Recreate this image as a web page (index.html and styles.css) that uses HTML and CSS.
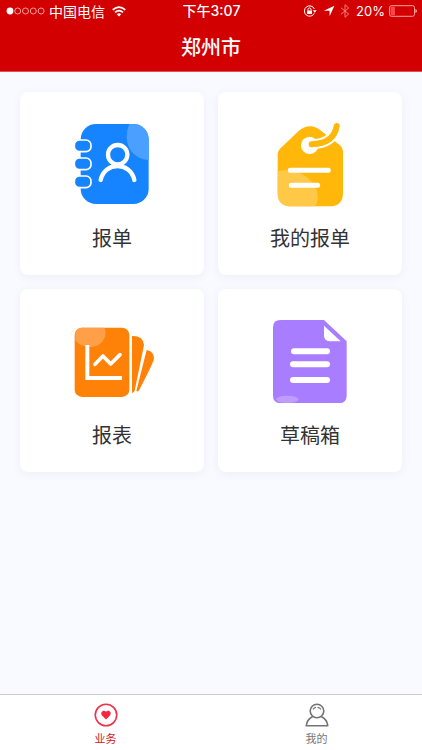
FILE: index.html
```html
<!DOCTYPE html>
<html lang="zh-CN">
<head>
<meta charset="utf-8">
<meta name="viewport" content="width=device-width, initial-scale=1">
<title>郑州市</title>
<link rel="stylesheet" href="styles.css">
</head>
<body>
<header class="header">
  <div class="status">
    <div class="status-side">
      <svg class="signal" viewBox="0 0 39 8" aria-hidden="true">
        <circle cx="4" cy="4" r="3.4" fill="#fff"/>
        <g fill="none" stroke="#ffc4c4" stroke-width=".8"><circle cx="11.7" cy="4" r="3"/><circle cx="19.5" cy="4" r="3"/><circle cx="27.3" cy="4" r="3"/><circle cx="35.1" cy="4" r="3"/></g>
      </svg>
      <span>中国电信</span>
      <svg class="wifi" viewBox="0 0 14 11" aria-hidden="true">
        <g fill="none" stroke="#fff" stroke-width="1.7"><path d="M.7 3.9Q7-1.8 13.3 3.9"/><path d="M3 6.4Q7 2.9 11 6.4"/></g>
        <path d="M4.8 8.3Q7 6.3 9.2 8.3L7 10.6Z" fill="#fff"/>
      </svg>
    </div>
    <time class="clock">下午3:07</time>
    <div class="status-side status-right">
      <svg class="lock" viewBox="0 0 14 12" aria-hidden="true">
        <path d="M11.3 8.3A5.2 5.2 0 1 1 11.4 4" fill="none" stroke="#fff" stroke-width="1"/>
        <path d="M9.7 5.2h4l-2 2.6z" fill="#fff"/>
        <rect x="4" y="5.4" width="5" height="3.6" rx=".4" fill="#fff"/>
        <path d="M5 5.6V4.4a1.5 1.5 0 0 1 3 0v1.2" fill="none" stroke="#fff"/>
      </svg>
      <svg class="arrow" viewBox="0 0 12 12" aria-hidden="true"><path d="M11.4.8 6.6 11.2V5.8H.8Z" fill="#fff"/></svg>
      <svg class="bluetooth" viewBox="0 0 10 14" aria-hidden="true"><path d="M1 3.8 8.7 10 5 13.3V.7L8.7 4 1 10.2" fill="none" stroke="#f08080" stroke-width="1"/></svg>
      <span class="percent">20%</span>
      <svg class="battery" viewBox="0 0 28 12" aria-hidden="true">
        <rect x=".5" y=".7" width="25" height="10.6" rx="2" fill="none" stroke="#ffa0a0"/>
        <rect x="1.5" y="1.7" width="4.5" height="8.6" rx=".8" fill="#ff4548"/>
        <path d="M26.5 4v4q1.3-.6 1.3-2t-1.3-2" fill="#ffd0d0"/>
      </svg>
    </div>
  </div>
  <h1 class="title">郑州市</h1>
</header>

<main class="grid">
  <a class="card" href="#report">
    <svg class="icon" viewBox="6 12 300 300" aria-hidden="true">
      <rect x="62" y="42" width="204" height="240" rx="46" fill="#1684ff"/>
      <path d="M208 42h12a46 46 0 0 1 46 46v62C228 148 200 119 200 80Q200 58 208 42Z" fill="#4a9fff"/>
      <g fill="#1684ff" stroke="#fff" stroke-width="5">
        <rect x="43" y="90" width="50" height="35" rx="15"/><rect x="43" y="144" width="50" height="35" rx="15"/><rect x="43" y="198" width="50" height="35" rx="15"/>
      </g>
      <g fill="none" stroke="#fff" stroke-width="13" stroke-linecap="round"><circle cx="173" cy="134" r="29"/><path d="M122 210C134 154 211 154 223 210"/></g>
    </svg>
    <span>报单</span>
  </a>
  <a class="card" href="#my-reports">
    <svg class="icon" viewBox="0 12 300 300" aria-hidden="true">
      <path d="M63 113 115 64Q150 34 185 64L240 106Q249 114 249 128V248Q249 289 208 289H94Q53 289 53 248V134Q53 122 63 113Z" fill="#ffb80a"/>
      <path d="M53 184C112 169 169 208 173 258Q174 277 165 289H94Q53 289 53 248Z" fill="#ffc947"/>
      <circle cx="149" cy="106" r="26" fill="#fff"/>
      <path d="M155 103Q222 100 230 48" fill="none" stroke="#fff" stroke-width="30"/>
      <path d="M155 103Q222 100 230 48" fill="none" stroke="#ffb80a" stroke-width="18" stroke-linecap="round"/>
      <path d="M91 181H205M94 226H173" stroke="#fff" stroke-width="15" stroke-linecap="round"/>
    </svg>
    <span>我的报单</span>
  </a>
  <a class="card" href="#statistics">
    <svg class="icon" viewBox="6 3 300 300" aria-hidden="true">
      <rect x="44" y="53" width="164" height="208" rx="22" fill="#ff8208"/>
      <path d="M46 70Q50 53 66 53H133C146 78 124 111 91 111Q60 111 46 91Z" fill="#ff9f48"/>
      <path d="M34 73Q36 60 47 54" fill="none" stroke="#ffe5ca" stroke-width="2"/>
      <path d="M216 78Q249 76 252 105L224 242Q222 248 216 249Z" fill="#ff8208"/>
      <path d="M260 120Q282 124 282 146Q280 158 238 239Q234 247 229 243Z" fill="#ff8208"/>
      <g fill="none" stroke="#fff"><path d="M82 105V204H186" stroke-width="12"/><path d="M105 163 129 138 152 162 180 134" stroke-width="11" stroke-linecap="round" stroke-linejoin="round"/></g>
    </svg>
    <span>报表</span>
  </a>
  <a class="card" href="#drafts">
    <svg class="icon" viewBox="0 3 300 300" aria-hidden="true">
      <path d="M61 30H192L260 94V257Q260 279 238 279H61Q39 279 39 257V52Q39 30 61 30Z" fill="#a97dff"/>
      <path d="M192 47 242 94H211Q192 94 192 76Z" fill="#fff"/>
      <path d="M102 124H201M99 163H201M99 210H201" stroke="#fff" stroke-width="18" stroke-linecap="round"/>
      <ellipse cx="82" cy="268" rx="34" ry="11" fill="#bf9dff"/>
    </svg>
    <span>草稿箱</span>
  </a>
</main>

<nav class="tabs">
  <a class="tab tab-active" href="#business" aria-current="page">
    <svg class="tab-icon" viewBox="0 0 24 24" aria-hidden="true">
      <circle cx="12" cy="12" r="10.7" fill="none" stroke="#ee3148" stroke-width="1.6"/>
      <path d="M12 16.4 8 12.4C5.6 9.4 9.5 6 12 8.8C14.5 6 18.4 9.4 16 12.4Z" fill="#f5263f"/>
    </svg>
    <span>业务</span>
  </a>
  <a class="tab" href="#mine">
    <svg class="tab-icon" viewBox="0 0 24 24" aria-hidden="true">
      <g fill="none" stroke="#747474" stroke-width="1.6" stroke-linejoin="round"><circle cx="12" cy="8" r="6.8"/><path d="M7.8 13.5Q2 16.2 1.2 22.8H22.8Q22 16.2 16.2 13.5"/><path d="M8 6.4Q9.1 4.8 11 4.4M12.5 4.3Q14.8 4.6 16 6.3" stroke-width="1.2"/></g>
    </svg>
    <span>我的</span>
  </a>
</nav>
</body>
</html>
```
FILE: styles.css
```css
* {
  box-sizing: border-box;
}

body {
  margin: 0;
  min-height: 100vh;
  display: flex;
  flex-direction: column;
  background: #f9faff;
  color: #333;
  font-family: "Noto Sans CJK SC", sans-serif;
}

svg {
  display: block;
  flex: none;
}

a {
  color: inherit;
  text-decoration: none;
}

.header {
  padding-bottom: 9px;
  border-bottom: 1px solid #e05058;
  background: #d20000;
  color: #fff;
}

.status {
  display: grid;
  grid-template-columns: 1fr auto 1fr;
  align-items: center;
  height: 22px;
  padding: 0 5px 0 6px;
  font-size: 14px;
  line-height: 22px;
}

.status-side {
  display: flex;
  align-items: center;
  gap: 4px;
}

.status-right {
  justify-content: flex-end;
}

.signal {
  width: 39px;
  height: 8px;
}

.wifi {
  width: 14px;
  height: 11px;
  margin-left: 3px;
}

.clock,
.percent {
  font-family: Inter, "Noto Sans CJK SC", sans-serif;
}

.clock {
  font-weight: 500;
}

.percent {
  font-size: 13px;
}

.lock {
  width: 14px;
  height: 12px;
}

.arrow {
  width: 12px;
  height: 12px;
  margin-left: 2px;
}

.bluetooth {
  width: 10px;
  height: 14px;
  margin: 0 2px 0 1px;
}

.battery {
  width: 28px;
  height: 12px;
}

.title {
  margin: 9px 0 0;
  font-size: 20px;
  font-weight: 500;
  line-height: 31px;
  text-align: center;
}

.grid {
  flex: 1;
  display: grid;
  grid-template-columns: 1fr 1fr;
  align-content: start;
  gap: 14px;
  padding: 20px;
}

.card {
  display: flex;
  flex-direction: column;
  align-items: center;
  gap: 9px;
  padding: 22px 0;
  border-radius: 8px;
  background: #fff;
  box-shadow: 0 2px 8px #eeeef8;
  font-size: 20px;
  line-height: 30px;
}

.icon {
  width: 100px;
  height: 100px;
}

.tabs {
  display: flex;
  border-top: 1px solid #ccccd0;
  background: #fff;
}

.tab {
  flex: 1;
  display: flex;
  flex-direction: column;
  align-items: center;
  gap: 3px;
  padding: 8px 0 4px;
  color: #777;
  font-size: 11px;
  line-height: 16px;
}

.tab-active {
  color: #cc1c22;
}

.tab-icon {
  width: 24px;
  height: 24px;
}
```
